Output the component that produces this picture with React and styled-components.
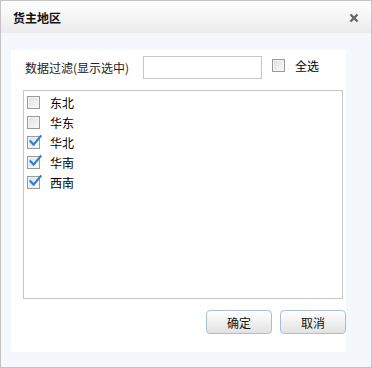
import styled, { createGlobalStyle } from "styled-components"

const GlobalStyle = createGlobalStyle`
  html, body {
    margin: 0;
    padding: 0;
    background: #ffffff;
  }
  body {
    font-family: "Noto Sans CJK SC", "DejaVu Sans", sans-serif;
    font-size: 12px;
    color: #000;
  }
`

const regions = [
  { name: "东北", checked: false },
  { name: "华东", checked: false },
  { name: "华北", checked: true },
  { name: "华南", checked: true },
  { name: "西南", checked: true },
]

function CheckBox({ checked }) {
  return (
    <Box>
      {checked && (
        <Tick width="14" height="14" viewBox="0 0 14 14">
          <path d="M2.5 7.2 L5.6 10.6 L12.6 2.2" fill="none" stroke="#2f7fd6" strokeWidth="2.2" strokeLinecap="square" />
        </Tick>
      )}
    </Box>
  )
}

export default function App() {
  return (
    <>
      <GlobalStyle />
      <Dialog>
        <Header>
          <Title>货主地区</Title>
          <Close width="10" height="10" viewBox="0 0 10 10">
            <path d="M1.5 1.5 L8.5 8.5 M8.5 1.5 L1.5 8.5" stroke="#666" strokeWidth="2.4" />
          </Close>
        </Header>
        <Body>
          <Panel>
            <FilterRow>
              <Label>数据过滤(显示选中)</Label>
              <Input />
              <SelectAll>
                <CheckBox checked={false} />
                <span>全选</span>
              </SelectAll>
            </FilterRow>
            <List>
              {regions.map((r) => (
                <Item key={r.name}>
                  <CheckBox checked={r.checked} />
                  <span>{r.name}</span>
                </Item>
              ))}
            </List>
            <Buttons>
              <Button>确定</Button>
              <Button>取消</Button>
            </Buttons>
          </Panel>
        </Body>
      </Dialog>
    </>
  )
}

const Dialog = styled.div`
  width: 372px;
  height: 368px;
  box-sizing: border-box;
  border: 1px solid #c4c4c4;
  display: flex;
  flex-direction: column;
  background: #f4f7fc;
`

const Header = styled.div`
  height: 32px;
  flex: none;
  display: flex;
  align-items: center;
  justify-content: space-between;
  padding: 0 12px 0 12px;
  background: linear-gradient(#ffffff, #ebebeb);
`

const Title = styled.div`
  font-weight: bold;
  font-size: 12px;
  color: #111;
  margin-top: 1px;
`

const Close = styled.svg`
  display: block;
  margin-top: 2px;
`

const Body = styled.div`
  flex: 1;
  padding: 17px 25px 15px 10px;
  display: flex;
`

const Panel = styled.div`
  flex: 1;
  background: #ffffff;
  padding: 6px 0 0 12px;
  display: flex;
  flex-direction: column;
`

const FilterRow = styled.div`
  display: flex;
  align-items: center;
  height: 23px;
`

const Label = styled.span`
  margin-left: 2px;
  width: 118px;
  color: #222;
`

const Input = styled.div`
  width: 119px;
  height: 23px;
  box-sizing: border-box;
  border: 1px solid #c6c6c6;
  background: #fff;
`

const SelectAll = styled.label`
  display: flex;
  align-items: center;
  gap: 10px;
  margin-left: 10px;
  margin-top: -5px;
`

const Box = styled.span`
  position: relative;
  display: inline-block;
  flex: none;
  width: 13px;
  height: 13px;
  box-sizing: border-box;
  border: 1px solid #9a9a9a;
  background: linear-gradient(135deg, #dedede, #fbfbfb);
  box-shadow: inset 0 0 0 1px #f4f4f4;
`

const Tick = styled.svg`
  position: absolute;
  left: 0px;
  top: -3px;
`

const List = styled.div`
  margin: 11px 3px 0 0;
  height: 209px;
  box-sizing: border-box;
  border: 1px solid #c6c6c6;
  padding: 1px 0 0 3px;
`

const Item = styled.div`
  height: 20px;
  display: flex;
  align-items: center;
  gap: 10px;
`

const Buttons = styled.div`
  margin-top: 11px;
  display: flex;
  justify-content: flex-end;
  gap: 8px;
`

const Button = styled.button`
  width: 66px;
  height: 24px;
  border: 1px solid #a9bfd9;
  border-radius: 4px;
  background: linear-gradient(#ffffff, #e2e2e2);
  font-family: "Noto Sans CJK SC", sans-serif;
  font-size: 12px;
  color: #111;
  padding: 0;
`
